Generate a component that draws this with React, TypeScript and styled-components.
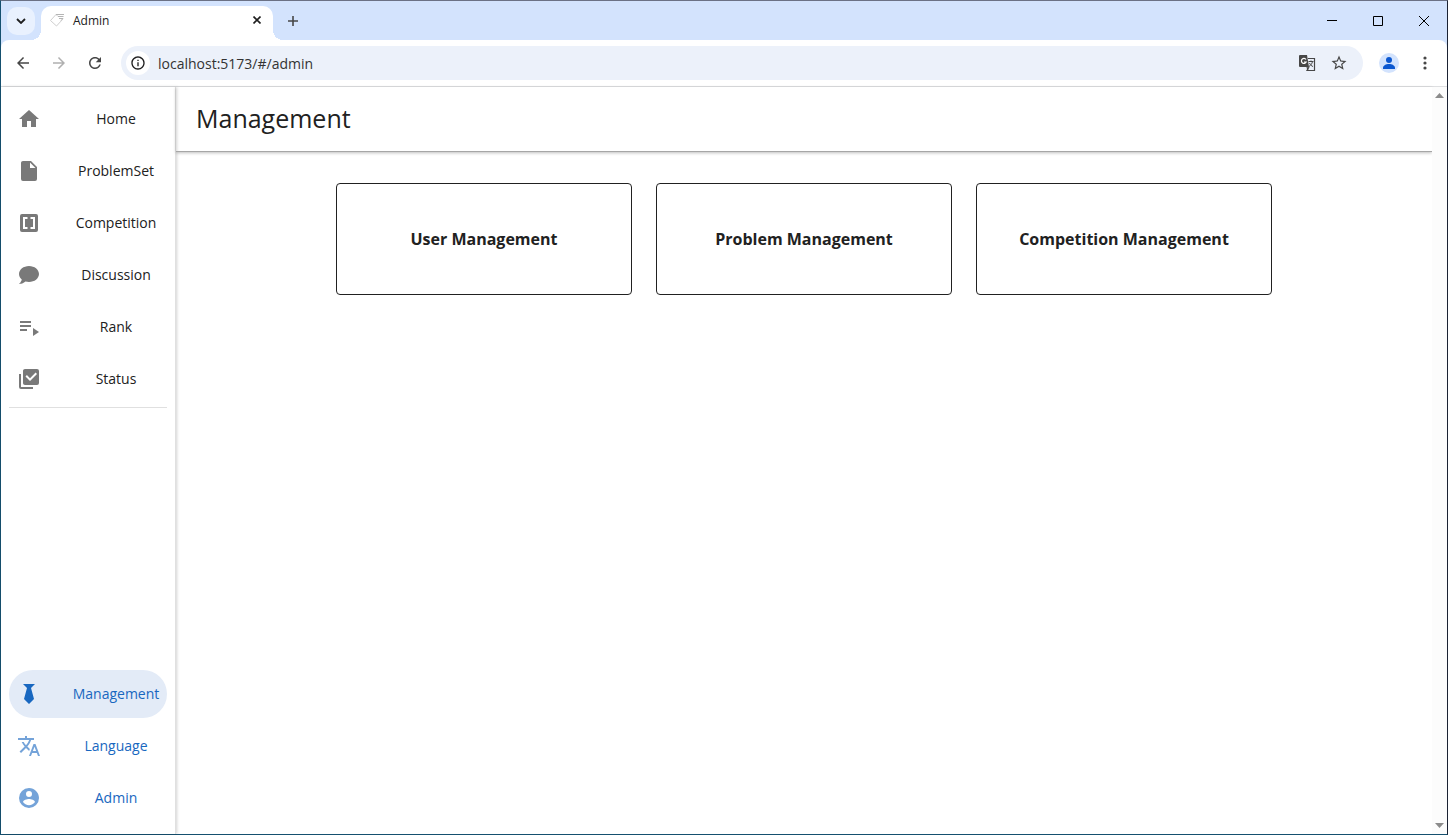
import React from 'react';
import styled, { createGlobalStyle, css } from 'styled-components';

const GlobalStyle = createGlobalStyle`
  *, *::before, *::after { box-sizing: border-box; }
  body {
    margin: 0;
    font-family: 'Open Sans', 'Noto Sans', sans-serif;
    font-size: 14px;
    color: #212121;
    background: #fff;
  }
  button { font: inherit; color: inherit; border: 0; padding: 0; background: none; cursor: pointer; }
  svg { display: block; flex: none; }
`;

const Window = styled.div`
  display: flex;
  flex-direction: column;
  min-height: 100vh;
  border: 1px solid #15506f;
  border-top-color: #6b7185;
  border-right-color: #1b2233;
  background: #d3e3fd;
`;

const TabStrip = styled.div`
  display: flex;
  align-items: center;
  height: 39px;
  padding-left: 6px;
`;

const TabSearch = styled.button`
  display: grid;
  place-items: center;
  width: 28px;
  height: 28px;
  border-radius: 10px;
  background: #e9f1fe;
`;

const Tab = styled.div`
  position: relative;
  display: flex;
  align-items: center;
  align-self: flex-end;
  width: 232px;
  height: 34px;
  margin-left: 6px;
  padding: 0 8px 6px;
  border-radius: 10px 10px 0 0;
  background: #fff;
  &::before, &::after {
    content: '';
    position: absolute;
    bottom: 0;
    width: 10px;
    height: 10px;
  }
  &::before { right: 100%; background: radial-gradient(circle at 0 0, transparent 10px, #fff 10px); }
  &::after { left: 100%; background: radial-gradient(circle at 100% 0, transparent 10px, #fff 10px); }
`;

const TabTitle = styled.span`
  flex: 1;
  padding: 2px 0 0 8px;
  font-size: 12px;
  line-height: 16px;
`;

const IconButton = styled.button<{ $size?: number }>`
  display: grid;
  place-items: center;
  width: ${(p) => p.$size ?? 16}px;
  height: ${(p) => p.$size ?? 16}px;
`;

const NewTab = styled(IconButton)`
  margin-left: 6px;
`;

const WindowControls = styled.div`
  display: flex;
  margin-left: auto;
`;

const WindowControl = styled.button`
  display: grid;
  place-items: center;
  width: 46px;
  height: 39px;
`;

const Toolbar = styled.div`
  display: flex;
  align-items: center;
  height: 47px;
  padding: 0 4px;
  border-bottom: 1px solid #dedfe1;
  border-radius: 8px 8px 0 0;
  background: #fff;
`;

const AddressBar = styled.div`
  display: flex;
  flex: 1;
  align-items: center;
  height: 34px;
  margin: 0 8px;
  padding: 0 8px 0 5px;
  border-radius: 17px;
  background: #ecf1fa;
`;

const SiteInfo = styled(IconButton)`
  border-radius: 50%;
  background: #fff;
`;

const UrlInput = styled.input`
  flex: 1;
  min-width: 0;
  height: 24px;
  margin-left: 8px;
  padding: 0;
  border: 0;
  outline: 0;
  background: none;
  font: inherit;
  color: #333;
`;

const Page = styled.div`
  display: flex;
  flex: 1;
  background: #fff;
`;

const Sidebar = styled.nav`
  display: flex;
  flex-direction: column;
  width: 175px;
  padding: 8px;
  border-right: 1px solid #e0e0e0;
  box-shadow: 1px 0 3px rgba(0, 0, 0, 0.18);
`;

const NavGroup = styled.div<{ $bottom?: boolean }>`
  display: flex;
  flex-direction: column;
  gap: 4px;
  ${(p) =>
    p.$bottom
      ? css`margin-top: auto; padding-bottom: 4px; color: #1867c0;`
      : css`border-bottom: 1px solid #e0e0e0; padding-bottom: 4px;`}
`;

const NavLink = styled.a<{ $active?: boolean }>`
  display: flex;
  align-items: center;
  height: 48px;
  padding-left: 8px;
  border-radius: 24px;
  color: inherit;
  text-decoration: none;
  background: ${(p) => (p.$active ? '#e3ebf7' : 'transparent')};
  svg { opacity: ${(p) => (p.$active ? 1 : 0.6)}; }
`;

const NavLabel = styled.span`
  flex: 1;
  padding-left: 24px;
  line-height: 20px;
  text-align: center;
  white-space: nowrap;
`;

const Main = styled.main`
  flex: 1;
  min-width: 0;
`;

const AppBar = styled.header`
  display: flex;
  align-items: center;
  height: 65px;
  padding: 0 20px;
  border-bottom: 1px solid #a6a6a6;
  box-shadow: 0 1px 3px rgba(0, 0, 0, 0.25);
`;

const Title = styled.h1`
  margin: 0;
  padding-bottom: 2px;
  font-size: 25px;
  line-height: 32px;
  font-weight: 400;
`;

const Cards = styled.div`
  display: grid;
  grid-template-columns: repeat(3, 296px);
  justify-content: center;
  gap: 24px;
  padding: 31px 24px;
`;

const Card = styled.button`
  height: 112px;
  border: 1px solid #212121;
  border-radius: 4px;
  font-size: 16px;
  line-height: 24px;
  font-weight: 700;
`;

const ScrollTrack = styled.div`
  display: flex;
  flex-direction: column;
  align-items: center;
  justify-content: space-between;
  width: 15px;
  padding: 6px 0;
  background: #fcfcfc;
`;

type IconProps = { d: string; size?: number; color?: string };

const Icon = ({ d, size = 24, color = 'currentColor' }: IconProps) => (
  <svg width={size} height={size} viewBox="0 0 24 24" fill={color} fillRule="evenodd" aria-hidden="true">
    <path d={d} />
  </svg>
);

const paths = {
  home: 'M10 20V14H14V20H19V12H22L12 3L2 12H5V20H10Z',
  file: 'M13 9V3.5L18.5 9M6 2C4.89 2 4 2.89 4 4V20A2 2 0 0 0 6 22H18A2 2 0 0 0 20 20V8L14 2H6Z',
  brackets:
    'M5 3H19A2 2 0 0 1 21 5V19A2 2 0 0 1 19 21H5A2 2 0 0 1 3 19V5A2 2 0 0 1 5 3ZM6 6V18H10.500V16H8V8H10.500V6ZM13.500 6V8H16V16H13.500V18H18V6Z',
  chat: 'M12 3C17.5 3 22 6.58 22 11C22 15.42 17.5 19 12 19C10.76 19 9.57 18.82 8.47 18.5C5.55 21 2 21 2 21C4.33 18.67 4.7 17.1 4.75 16.5C3.05 15.07 2 13.13 2 11C2 6.58 6.5 3 12 3Z',
  playlist: 'M3 10h11v2H3zM3 6h11v2H3zM3 14h7v2H3zM16 13v8l6-4z',
  checks:
    'M22 16A2 2 0 0 1 20 18H8C6.89 18 6 17.1 6 16V4C6 2.89 6.89 2 8 2H20A2 2 0 0 1 22 4V16M16 20V22H4A2 2 0 0 1 2 20V7H4V20H16M13 14L20 7L18.59 5.59L13 11.17L9.91 8.09L8.5 9.5L13 14Z',
  tie: 'M6 2L10 6L7 17L12 22L17 17L14 6L18 2Z',
  translate:
    'M12.87 15.07l-2.54-2.51.03-.03c1.74-1.94 2.98-4.17 3.71-6.53H17V4h-7V2H8v2H1v1.99h11.17C11.5 7.92 10.44 9.75 9 11.35 8.07 10.32 7.3 9.19 6.69 8h-2c.73 1.63 1.73 3.17 2.98 4.56l-5.09 5.02L4 19l5-5 3.11 3.11.76-2.04zM18.5 10h-2L12 22h2l1.12-3h4.75L21 22h2l-4.5-12zm-2.62 7l1.62-4.33L19.12 17h-3.24z',
  account:
    'M12 19.2C9.5 19.2 7.29 17.92 6 16C6.03 14 10 12.9 12 12.9C14 12.9 17.97 14 18 16C16.71 17.92 14.5 19.2 12 19.2M12 5A3 3 0 0 1 15 8A3 3 0 0 1 12 11A3 3 0 0 1 9 8A3 3 0 0 1 12 5M12 2A10 10 0 0 0 2 12A10 10 0 0 0 12 22A10 10 0 0 0 22 12C22 6.47 17.5 2 12 2Z',
  back: 'M20 11H7.83l5.59-5.59L12 4l-8 8 8 8 1.41-1.41L7.83 13H20v-2z',
  forward: 'M12 4l-1.41 1.41L16.17 11H4v2h12.17l-5.58 5.59L12 20l8-8z',
  reload:
    'M17.65 6.35C16.2 4.9 14.21 4 12 4c-4.42 0-7.99 3.58-7.99 8s3.57 8 7.99 8c3.73 0 6.84-2.55 7.73-6h-2.08c-.82 2.33-3.04 4-5.65 4-3.31 0-6-2.69-6-6s2.69-6 6-6c1.66 0 3.14.69 4.22 1.78L13 11h7V4l-2.35 2.35z',
  info: 'M11 7h2v2h-2zm0 4h2v6h-2zm1-9C6.48 2 2 6.48 2 12s4.480 10 10 10 10-4.480 10-10S17.520 2 12 2zm0 18c-4.410 0-8-3.590-8-8s3.590-8 8-8 8 3.590 8 8-3.590 8-8 8z',
  star: 'M22 9.24l-7.190-.620L12 2 9.190 8.630 2 9.240l5.460 4.730L5.820 21 12 17.270 18.180 21l-1.630-7.030L22 9.240zM12 15.400l-3.760 2.270 1-4.280-3.320-2.880 4.380-.380L12 6.100l1.710 4.040 4.380.380-3.320 2.880 1 4.280L12 15.400z',
};

const TranslatePage = () => (
  <svg width="18" height="18" viewBox="0 0 18 18" fill="none" aria-hidden="true">
    <path d="M2 1h7l2 12H2a1 1 0 0 1-1-1V2a1 1 0 0 1 1-1z" fill="#474747" />
    <path d="M8 5.500A2.500 2.500 0 1 0 8.200 8H6" stroke="#fff" strokeWidth="1.200" />
    <path d="M10 4.500h6.500v12H9l2-3.500M9 13l1 3" stroke="#474747" strokeWidth="1.200" />
    <path d="M10.500 7.500h5M13 6.500v1M14.500 7.500c-.5 2.500-2 4-3.500 5M11.500 9c1 2 2 3 3.500 3.500" stroke="#474747" />
  </svg>
);

const mainLinks = [
  { label: 'Home', icon: paths.home, href: '#/' },
  { label: 'ProblemSet', icon: paths.file, href: '#/problemset' },
  { label: 'Competition', icon: paths.brackets, href: '#/competition' },
  { label: 'Discussion', icon: paths.chat, href: '#/discussion' },
  { label: 'Rank', icon: paths.playlist, href: '#/rank' },
  { label: 'Status', icon: paths.checks, href: '#/status' },
];

const userLinks = [
  { label: 'Management', icon: paths.tie, href: '#/admin', active: true },
  { label: 'Language', icon: paths.translate, href: '#/language' },
  { label: 'Admin', icon: paths.account, href: '#/profile' },
];

const cards = ['User Management', 'Problem Management', 'Competition Management'];

export default function App() {
  return (
    <Window>
      <GlobalStyle />
      <TabStrip>
        <TabSearch aria-label="Search tabs">
          <svg width="10" height="6" viewBox="0 0 10 6" fill="none" stroke="#1f1f1f" strokeWidth="1.8">
            <path d="M1 1l4 4 4-4" />
          </svg>
        </TabSearch>
        <Tab>
          <svg width="16" height="16" viewBox="0 0 16 16" fill="none" stroke="#cfcfcf" aria-hidden="true">
            <path d="M7 2.500L1.500 8.500 7.500 14l6-6.500M7 2.500l2 2" />
            <path d="M7 2.500h8M9 4.500h5.500M10 6.500h4M12 8.500l2-2" stroke="#b5b5b5" />
          </svg>
          <TabTitle>Admin</TabTitle>
          <IconButton aria-label="Close tab">
            <svg width="8" height="8" viewBox="0 0 8 8" stroke="#1f1f1f" strokeWidth="1.600">
              <path d="M.5.500l7 7M7.500.500l-7 7" />
            </svg>
          </IconButton>
        </Tab>
        <NewTab $size={28} aria-label="New tab">
          <svg width="10" height="10" viewBox="0 0 10 10" stroke="#474747" strokeWidth="1.600">
            <path d="M5 0v10M0 5h10" />
          </svg>
        </NewTab>
        <WindowControls>
          <WindowControl aria-label="Minimize">
            <svg width="10" height="10" viewBox="0 0 10 10" stroke="#000"><path d="M0 4.500h10" /></svg>
          </WindowControl>
          <WindowControl aria-label="Maximize">
            <svg width="10" height="10" viewBox="0 0 10 10" stroke="#000" fill="none"><path d="M.5.500h9v9h-9z" /></svg>
          </WindowControl>
          <WindowControl aria-label="Close">
            <svg width="10" height="10" viewBox="0 0 10 10" stroke="#000"><path d="M0 0l10 10M10 0L0 10" /></svg>
          </WindowControl>
        </WindowControls>
      </TabStrip>
      <Toolbar>
        <IconButton $size={36} aria-label="Back"><Icon d={paths.back} size={18} color="#474747" /></IconButton>
        <IconButton $size={36} aria-label="Forward"><Icon d={paths.forward} size={18} color="#b0b0b0" /></IconButton>
        <IconButton $size={36} aria-label="Reload"><Icon d={paths.reload} size={18} color="#474747" /></IconButton>
        <AddressBar>
          <SiteInfo $size={24} aria-label="Site information"><Icon d={paths.info} size={16} color="#1f1f1f" /></SiteInfo>
          <UrlInput aria-label="Address" defaultValue="localhost:5173/#/admin" />
          <IconButton $size={32} aria-label="Translate"><TranslatePage /></IconButton>
          <IconButton $size={32} aria-label="Bookmark"><Icon d={paths.star} size={18} color="#474747" /></IconButton>
        </AddressBar>
        <IconButton $size={36} aria-label="Profile">
          <svg width="20" height="20" viewBox="0 0 20 20" aria-hidden="true">
            <circle cx="10" cy="10" r="10" fill="#d3e3fd" />
            <circle cx="10" cy="7" r="3" fill="#0b57d0" />
            <path d="M4 16v-1c0-2.500 3-4 6-4s6 1.500 6 4v1z" fill="#0b57d0" />
          </svg>
        </IconButton>
        <IconButton $size={36} aria-label="Menu">
          <svg width="4" height="14" viewBox="0 0 4 14" fill="#474747" aria-hidden="true">
            <circle cx="2" cy="2" r="1.600" />
            <circle cx="2" cy="7" r="1.600" />
            <circle cx="2" cy="12" r="1.600" />
          </svg>
        </IconButton>
      </Toolbar>
      <Page>
        <Sidebar>
          <NavGroup>
            {mainLinks.map((l) => (
              <NavLink key={l.label} href={l.href}>
                <Icon d={l.icon} />
                <NavLabel>{l.label}</NavLabel>
              </NavLink>
            ))}
          </NavGroup>
          <NavGroup $bottom>
            {userLinks.map((l) => (
              <NavLink key={l.label} href={l.href} $active={l.active}>
                <Icon d={l.icon} />
                <NavLabel>{l.label}</NavLabel>
              </NavLink>
            ))}
          </NavGroup>
        </Sidebar>
        <Main>
          <AppBar><Title>Management</Title></AppBar>
          <Cards>
            {cards.map((c) => <Card key={c}>{c}</Card>)}
          </Cards>
        </Main>
        <ScrollTrack>
          <svg width="9" height="5" viewBox="0 0 9 5" fill="#8b8b8b"><path d="M0 5L4.500 0 9 5z" /></svg>
          <svg width="9" height="5" viewBox="0 0 9 5" fill="#8b8b8b"><path d="M0 0l4.500 5L9 0z" /></svg>
        </ScrollTrack>
      </Page>
    </Window>
  );
}
